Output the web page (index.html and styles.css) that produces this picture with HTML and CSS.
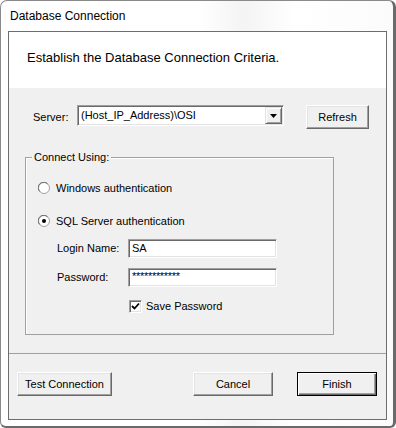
FILE: index.html
```html
<!DOCTYPE html>
<html>
<head>
<meta charset="utf-8">
<link rel="stylesheet" href="styles.css">
</head>
<body>
<div class="window">
  <div class="titlebar">Database Connection</div>
  <div class="client">
    <div class="header">Establish the Database Connection Criteria.</div>
    <div class="body">
      <div class="server-row">
        <span class="server-label">Server:</span>
        <div class="combo">
          <span class="combo-text">(Host_IP_Address)\OSI</span>
          <span class="drop-btn"><svg width="7" height="4" viewBox="0 0 7 4"><path d="M0 0H7L3.5 4Z" fill="#000"/></svg></span>
        </div>
        <div class="btn refresh">Refresh</div>
      </div>
      <div class="group">
        <div class="legend">Connect Using:</div>
        <div class="opt first">
          <svg class="radio" width="12" height="12" viewBox="0 0 12 12">
            <circle cx="6" cy="6" r="5.5" fill="#fff" stroke="#a0a0a0"/>
            <path d="M1.8 9.5A4.8 4.8 0 0 1 9.5 1.8" fill="none" stroke="#696969" stroke-width="1"/>
          </svg>
          <span>Windows authentication</span>
        </div>
        <div class="opt second">
          <svg class="radio" width="12" height="12" viewBox="0 0 12 12">
            <circle cx="6" cy="6" r="5.5" fill="#fff" stroke="#a0a0a0"/>
            <path d="M1.8 9.5A4.8 4.8 0 0 1 9.5 1.8" fill="none" stroke="#696969" stroke-width="1"/>
            <circle cx="6" cy="6" r="2" fill="#000"/>
          </svg>
          <span>SQL Server authentication</span>
        </div>
        <div class="field login">
          <span class="field-label">Login Name:</span>
          <div class="textbox">SA</div>
        </div>
        <div class="field password">
          <span class="field-label">Password:</span>
          <div class="textbox pw">************</div>
        </div>
        <div class="check-row">
          <span class="checkbox"><svg width="9" height="9" viewBox="0 0 9 9"><path d="M1 4L3.5 6.5L8 1.5" fill="none" stroke="#000" stroke-width="1.8"/></svg></span>
          <span>Save Password</span>
        </div>
      </div>
    </div>
    <div class="separator"></div>
    <div class="footer">
      <div class="btn test">Test Connection</div>
      <div class="spacer"></div>
      <div class="btn cancel">Cancel</div>
      <div class="btn finish">Finish</div>
    </div>
  </div>
</div>
</body>
</html>
```

FILE: styles.css
```css
* { box-sizing: border-box; }
html, body { margin: 0; padding: 0; background: #fff; }
body { font-family: "Liberation Sans", Arial, sans-serif; font-size: 11px; color: #000; }

.window {
  width: 396px;
  height: 428px;
  border-style: solid;
  border-color: #8a8a8a #6a6a6a #6a6a6a #8a8a8a;
  border-width: 1px 3px 2px 1px;
  border-radius: 7px 7px 6px 6px;
  padding: 0 6px 6px 7px;
  background: linear-gradient(90deg, #ffffff 0%, #ffffff 50%, #f4f4f4 62%, #ffffff 75%, #fbfbfb 100%);
  display: flex;
  flex-direction: column;
}

.titlebar {
  height: 30px;
  padding: 8px 0 0 2px;
  font-size: 12px;
  line-height: 14px;
  color: #000;
}

.client {
  width: 379px;
  height: 389px;
  border: 1px solid #6d6d6d;
  background: #f0f0f0;
  display: flex;
  flex-direction: column;
}

.header {
  height: 56px;
  background: #fff;
  font-size: 13px;
  line-height: 15px;
  padding: 18px 0 0 18px;
}

.body {
  height: 265px;
  padding-top: 17px;
}

.server-row {
  display: flex;
  align-items: flex-start;
  height: 23px;
  padding-left: 24px;
}
.server-label {
  width: 44px;
  line-height: 13px;
  padding-top: 6px;
}
.combo {
  width: 207px;
  height: 21px;
  background: #fff;
  border-style: solid;
  border-width: 1px;
  border-color: #a0a0a0 #fff #fff #a0a0a0;
  box-shadow: inset 1px 1px 0 #696969, inset -1px -1px 0 #e3e3e3;
  display: flex;
  align-items: center;
  padding: 1px 1px 1px 2px;
}
.combo-text {
  flex: 1;
  line-height: 13px;
  padding-left: 1px;
}
.drop-btn {
  width: 17px;
  height: 17px;
  background: #f0f0f0;
  border-style: solid;
  border-width: 1px;
  border-color: #e3e3e3 #696969 #696969 #e3e3e3;
  box-shadow: inset 1px 1px 0 #fff, inset -1px -1px 0 #a0a0a0;
  display: flex;
  align-items: center;
  justify-content: center;
}
.drop-btn svg { display: block; margin-top: 1px; }

.btn {
  height: 24px;
  background: #f0f0f0;
  border-style: solid;
  border-width: 1px;
  border-color: #fff #696969 #696969 #fff;
  box-shadow: inset -1px -1px 0 #a0a0a0, inset 1px 1px 0 #e3e3e3;
  display: flex;
  align-items: center;
  justify-content: center;
  line-height: 13px;
  font-size: 11px;
}
.refresh { width: 63px; margin-left: 22px; }

.group {
  width: 309px;
  height: 178px;
  margin: 29px 0 0 16px;
  border: 1px solid #a0a0a0;
  box-shadow: inset 1px 1px 0 #fff;
}
.legend {
  width: fit-content;
  margin: -7px 0 0 6px;
  padding: 0 2px;
  height: 13px;
  line-height: 13px;
  background: #f0f0f0;
}

.opt {
  display: flex;
  align-items: center;
  height: 16px;
  padding-left: 12px;
  line-height: 13px;
}
.opt.first { margin-top: 16px; }
.opt.second { margin-top: 17px; }
.radio { display: block; margin-right: 6px; }

.field {
  display: flex;
  align-items: center;
  height: 19px;
  margin-top: 10px;
  padding-left: 31px;
  line-height: 13px;
}
.field-label { width: 71px; }
.textbox {
  width: 149px;
  height: 19px;
  background: #fff;
  border-style: solid;
  border-width: 1px;
  border-color: #a0a0a0 #fff #fff #a0a0a0;
  box-shadow: inset 1px 1px 0 #696969, inset -1px -1px 0 #e3e3e3;
  padding: 2px 0 0 3px;
  line-height: 13px;
}
.textbox.pw { padding-top: 1px; letter-spacing: -0.3px; }

.check-row {
  display: flex;
  align-items: center;
  height: 13px;
  margin-top: 13px;
  padding-left: 103px;
  line-height: 13px;
}
.checkbox {
  width: 13px;
  height: 13px;
  margin-right: 4px;
  background: #fff;
  border-style: solid;
  border-width: 1px;
  border-color: #a0a0a0 #fff #fff #a0a0a0;
  box-shadow: inset 1px 1px 0 #696969, inset -1px -1px 0 #e3e3e3;
  display: flex;
  align-items: center;
  justify-content: center;
}
.checkbox svg { display: block; }

.separator {
  height: 1px;
  background: #a0a0a0;
}

.footer {
  flex: 1;
  display: flex;
  align-items: flex-start;
  padding: 18px 9px 0 8px;
}
.spacer { flex: 1; }
.test { width: 95px; }
.cancel { width: 80px; }
.finish {
  width: 80px;
  margin-left: 24px;
  border-color: #000;
  box-shadow: inset 1px 1px 0 #fff, inset -1px -1px 0 #696969, inset -2px -2px 0 #a0a0a0;
}
```
